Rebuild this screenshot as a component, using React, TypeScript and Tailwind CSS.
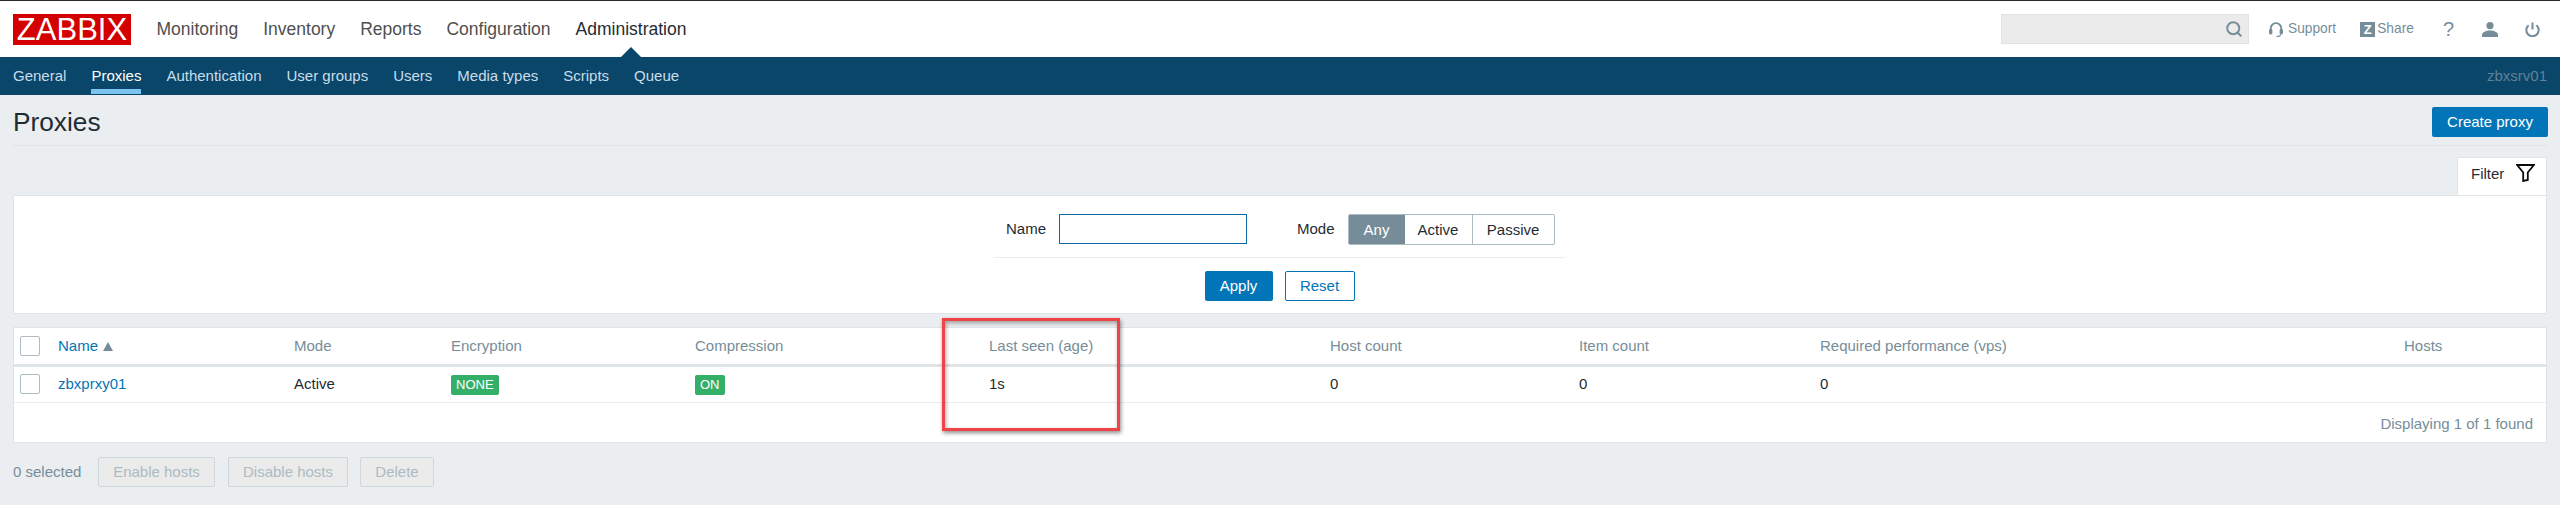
import { Search } from 'lucide-react'

const TOP_NAV = ['Monitoring', 'Inventory', 'Reports', 'Configuration', 'Administration']
const SUB_NAV = ['General', 'Proxies', 'Authentication', 'User groups', 'Users', 'Media types', 'Scripts', 'Queue']

const Checkbox = () => <span className="block h-5 w-5 rounded-[2px] border border-[#acbbc2] bg-white" />

const Badge = ({ label }: { label: string }) => (
  <span className="inline-block h-5 rounded-[2px] bg-[#34af67] px-[5px] text-[13px] leading-5 text-white">{label}</span>
)

const App = () => {
  return (
    <div className="relative h-[505px] w-[2560px] overflow-hidden bg-[#ebeef0] font-['Liberation_Sans',Arial,sans-serif] text-[15px] text-[#1f2c33]">
      {/* 상단 메뉴 */}
      <header className="flex h-[57px] items-center border-t border-[#2b2b2b] bg-white pl-[13px] pr-[20px]">
        <div className="flex h-[31px] w-[118px] items-center justify-center bg-[#d40000] text-[31px] leading-none text-white">ZABBIX</div>
        <nav className="ml-[13px] flex text-[17.5px]">
          {TOP_NAV.map(item => (
            <a key={item} className={`relative px-[12.5px] ${item === 'Administration' ? 'text-[#1f2c33]' : 'text-[#4f4f4f]'}`}>
              {item}
              {item === 'Administration' && (
                <span className="absolute left-1/2 top-[31px] h-0 w-0 -translate-x-1/2 border-x-[10px] border-b-[10px] border-x-transparent border-b-[#0a466a]" />
              )}
            </a>
          ))}
        </nav>
        <div className="ml-auto flex items-center text-[#768d99]">
          <div className="flex h-[30px] w-[248px] items-center justify-end border border-[#e3e3e3] bg-[#ebebeb] pr-[5px]">
            <Search size={18} strokeWidth={2.6} />
          </div>
          <div className="ml-[20px] flex items-center gap-[5px] text-[13.75px]">
            <svg width="14" height="15" viewBox="0 0 14 15" fill="none">
              <path d="M1.7 8V6.5a5.3 5.3 0 0 1 10.6 0V8" stroke="#768d99" strokeWidth="1.8" />
              <rect x="0" y="7" width="3.4" height="5.5" rx="1.4" fill="#768d99" />
              <rect x="10.6" y="7" width="3.4" height="5.5" rx="1.4" fill="#768d99" />
              <path d="M11.5 12.5c0 1.2-1 1.8-2.5 1.8H7.5" stroke="#768d99" strokeWidth="1.2" />
            </svg>
            Support
          </div>
          <div className="ml-[24px] flex items-center gap-[2px] text-[13.75px]">
            <span className="flex h-[15px] w-[15px] items-center justify-center bg-[#768d99] text-[13px] font-bold leading-none text-white">Z</span>
            Share
          </div>
          <span className="ml-[29px] text-[20px] leading-none">?</span>
          <svg width="16" height="15" viewBox="0 0 16 15" className="ml-[28px]">
            <circle cx="8" cy="3.6" r="3.6" fill="#768d99" />
            <path d="M0 15v-2.2C0 10.2 4 8.6 8 8.6s8 1.6 8 4.2V15z" fill="#768d99" />
          </svg>
          <svg width="15" height="15" viewBox="0 0 15 15" fill="none" className="ml-[27px]">
            <path d="M7.5 0.5v7" stroke="#768d99" strokeWidth="2" />
            <path d="M3.6 3.2a6.2 6.2 0 1 0 7.8 0" stroke="#768d99" strokeWidth="2" />
          </svg>
        </div>
      </header>

      {/* 서브 메뉴 */}
      <div className="flex h-[38px] items-center justify-between bg-[#0a466a] pl-[13px] pr-[13px]">
        <nav className="flex h-[37px] gap-[25px] self-start">
          {SUB_NAV.map(item => (
            <a key={item} className={`flex h-full items-center border-b-[5px] pt-[6px] ${item === 'Proxies' ? 'border-[#7dc4f0] text-white' : 'border-transparent text-[#c9dde8]'}`}>
              {item}
            </a>
          ))}
        </nav>
        <span className="text-[#5f8296]">zbxsrv01</span>
      </div>

      <main className="px-[13px]">
        {/* 제목 */}
        <div className="flex h-[51px] items-center justify-between border-b border-[#dfe4e7] pb-[1px]">
          <h1 className="pt-[7px] text-[26.25px] font-normal text-[#1f2c33]">Proxies</h1>
          <button className="mr-[-1px] mt-[5px] h-[30px] w-[116px] rounded-[2px] bg-[#0275b8] text-white">Create proxy</button>
        </div>

        {/* 필터 탭 */}
        <div className="mt-[11px] flex justify-end">
          <div className="flex h-[38px] w-[90px] items-center gap-[12px] rounded-t-[2px] border border-b-0 border-[#dfe4e7] bg-white pb-[4px] pl-[13px]">
            <span>Filter</span>
            <svg width="19" height="18" viewBox="0 0 19 18" className="-mt-[4px]">
              <path d="M1.2 1h16.6l-6 7.5v7.5l-4.6 1V8.500z" fill="none" stroke="#0b0b0b" strokeWidth="1.8" />
            </svg>
          </div>
        </div>

        {/* 필터 */}
        <section className="flex h-[119px] flex-col items-center border border-[#dfe4e7] bg-white">
          <div className="ml-[-1px] flex w-[571px] flex-col items-center">
            <div className="flex h-[62px] w-full items-start border-b border-[#ebeef0] pt-[18px]">
              <label className="ml-[12px] leading-[30px]">Name</label>
              <input className="ml-[13px] h-[30px] w-[188px] border border-[#0b6a9f] bg-white" />
              <label className="ml-[50px] leading-[30px]">Mode</label>
              <div className="ml-[13px] flex h-[31px] rounded-[2px] border border-[#acbbc2] leading-[29px]">
                <span className="w-[56px] bg-[#768d99] text-center text-white">Any</span>
                <span className="w-[68px] border-r border-[#acbbc2] text-center">Active</span>
                <span className="w-[81px] text-center">Passive</span>
              </div>
            </div>
            <div className="mt-[13px] flex gap-[12px]">
              <button className="h-[30px] w-[68px] rounded-[2px] bg-[#0275b8] text-white">Apply</button>
              <button className="h-[30px] w-[70px] rounded-[2px] border border-[#0275b8] text-[#0275b8]">Reset</button>
            </div>
          </div>
        </section>

        {/* 프록시 목록 */}
        <section className="mt-[13px] h-[116px] border border-[#dfe4e7] bg-white">
          <table className="w-full table-fixed border-collapse text-left">
            <colgroup>
              <col className="w-[44px]" />
              <col className="w-[236px]" />
              <col className="w-[157px]" />
              <col className="w-[244px]" />
              <col className="w-[294px]" />
              <col className="w-[341px]" />
              <col className="w-[249px]" />
              <col className="w-[241px]" />
              <col className="w-[584px]" />
              <col />
            </colgroup>
            <thead className="text-[#768d99]">
              <tr className="h-[37px] border-b-[3px] border-[#dfe4e7]">
                <th className="pl-[6px] font-normal"><Checkbox /></th>
                <th className="font-normal text-[#0275b8]">
                  Name <span className="ml-[1px] inline-block h-0 w-0 border-x-[5px] border-b-[9px] border-x-transparent border-b-[#768d99]" />
                </th>
                <th className="font-normal">Mode</th>
                <th className="font-normal">Encryption</th>
                <th className="font-normal">Compression</th>
                <th className="font-normal">Last seen (age)</th>
                <th className="font-normal">Host count</th>
                <th className="font-normal">Item count</th>
                <th className="font-normal">Required performance (vps)</th>
                <th className="font-normal">Hosts</th>
              </tr>
            </thead>
            <tbody>
              <tr className="h-[37px] border-b border-[#ebeef0]">
                <td className="pl-[6px]"><Checkbox /></td>
                <td className="text-[#0275b8]">zbxprxy01</td>
                <td>Active</td>
                <td><Badge label="NONE" /></td>
                <td><Badge label="ON" /></td>
                <td>1s</td>
                <td>0</td>
                <td>0</td>
                <td>0</td>
                <td />
              </tr>
            </tbody>
          </table>
          <div className="pr-[13px] pt-[10px] text-right text-[#768d99]">Displaying 1 of 1 found</div>
        </section>

        {/* 선택 동작 */}
        <div className="mt-[14px] flex h-[30px] items-center text-[#768d99]">
          <span className="w-[85px]">0 selected</span>
          <button className="h-[30px] w-[117px] rounded-[2px] border border-[#d0d7db] bg-[#ebebeb] text-[#acbbc2]">Enable hosts</button>
          <button className="ml-[13px] h-[30px] w-[120px] rounded-[2px] border border-[#d0d7db] bg-[#ebebeb] text-[#acbbc2]">Disable hosts</button>
          <button className="ml-[12px] h-[30px] w-[74px] rounded-[2px] border border-[#d0d7db] bg-[#ebebeb] text-[#acbbc2]">Delete</button>
        </div>
      </main>

      {/* 빨간 강조 상자 */}
      <div className="absolute left-[942px] top-[318px] h-[113px] w-[178px] border-[3px] border-[#f04345] shadow-[1px_2px_4px_rgba(0,0,0,0.45),inset_1px_2px_4px_rgba(0,0,0,0.35)]" />
    </div>
  )
}

export default App
